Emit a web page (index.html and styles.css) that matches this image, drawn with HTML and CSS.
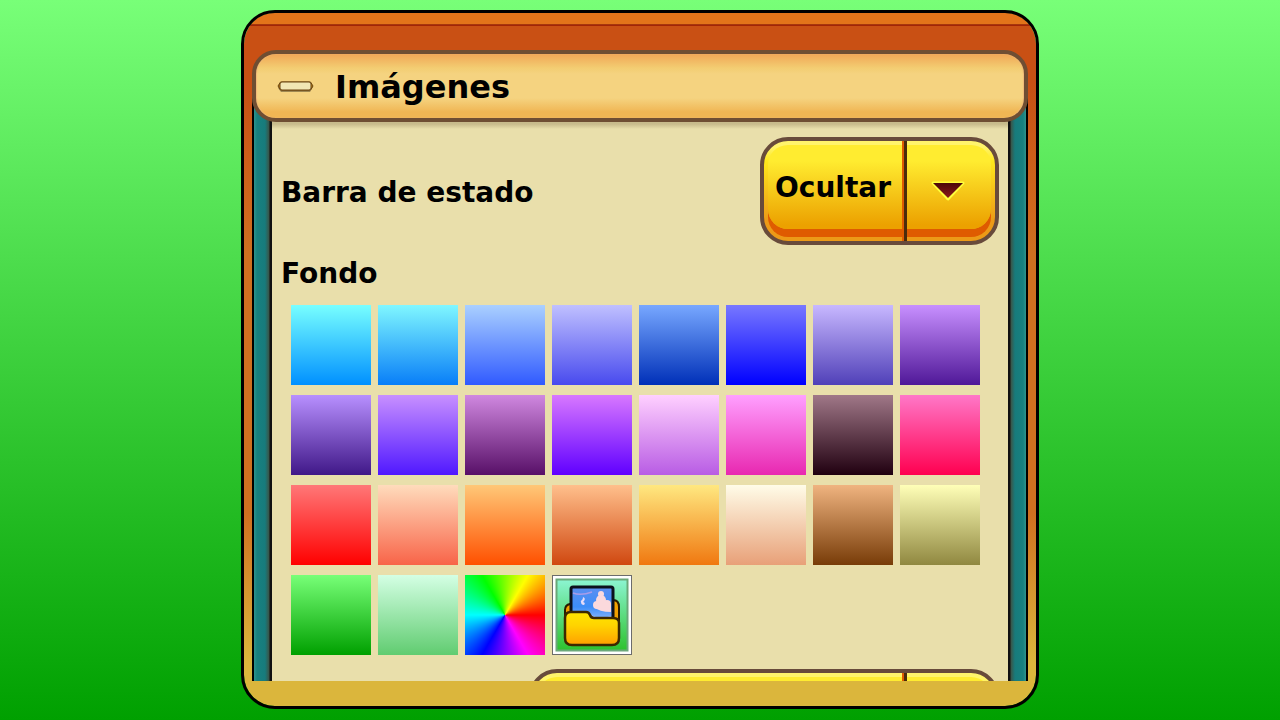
FILE: index.html
```html
<!DOCTYPE html>
<html lang="es">
<head>
    <meta charset="UTF-8">
    <meta name="viewport" content="width=device-width, initial-scale=1.0">
    <title>Imágenes</title>
    <link rel="stylesheet" href="styles.css">
</head>
<body>
    <main class="panel">
        <h1 class="panel-title">
            <button type="button" class="panel-header" id="toggle-btn" aria-expanded="true" aria-controls="settings">
                <svg class="minus-icon" width="37" height="14" viewBox="0 0 37 14" aria-hidden="true">
                    <path d="M4 4h29l3 3-3 5H4L1 8z" fill="#000" opacity=".35"/>
                    <path d="M3.500 2h30L36 6l-2.500 4h-30L1 6z" fill="#c48a1c" stroke="#6b4510"/>
                    <rect x="3" y="2" width="31" height="8" rx="2" fill="#f1e6b4" stroke="#6b4510"/>
                </svg>
                Imágenes
            </button>
        </h1>
        <div class="frame">
            <div class="settings" id="settings">
                <div class="row">
                    <label for="status-bar">Barra de estado</label>
                    <div class="dropdown">
                        <select id="status-bar">
                            <option>Ocultar</option>
                            <option>Mostrar</option>
                        </select>
                        <svg class="arrow" width="36" height="22" viewBox="0 0 36 22" aria-hidden="true">
                            <defs>
                                <linearGradient id="arrow-fill" x1="0" y1="0" x2="0" y2="1">
                                    <stop offset="0" stop-color="#4d0808"/>
                                    <stop offset="1" stop-color="#8c1a1a"/>
                                </linearGradient>
                            </defs>
                            <path d="M3 3h30L18 19z" fill="#ffff3c" stroke="#ffff3c" stroke-width="3" stroke-linejoin="round"/>
                            <path d="M3 3h30L18 18z" fill="url(#arrow-fill)"/>
                        </svg>
                    </div>
                </div>
                <h2 class="section-title">Fondo</h2>
                <div class="swatches" id="swatches">
                    <button type="button" class="swatch wheel" aria-label="Color"></button>
                    <button type="button" class="swatch picture" aria-label="Imagen">
                        <svg width="80" height="80" viewBox="0 0 80 80" aria-hidden="true">
                            <defs>
                                <linearGradient id="card" x1="0" y1="0" x2="0" y2="1">
                                    <stop offset="0" stop-color="#8cf5d2"/>
                                    <stop offset="1" stop-color="#2dc22d"/>
                                </linearGradient>
                                <linearGradient id="sky" x1="0" y1="0" x2="0" y2="1">
                                    <stop offset="0" stop-color="#5c8ff0"/>
                                    <stop offset=".55" stop-color="#3c8df8"/>
                                    <stop offset="1" stop-color="#9fc0fa"/>
                                </linearGradient>
                                <linearGradient id="folder" x1="0" y1="0" x2="0" y2="1">
                                    <stop offset="0" stop-color="#ffe600"/>
                                    <stop offset=".4" stop-color="#ffd400"/>
                                    <stop offset="1" stop-color="#ff9f00"/>
                                </linearGradient>
                            </defs>
                            <rect x=".5" y=".5" width="79" height="79" fill="#fff" stroke="#6c6c6c"/>
                            <rect x="4.500" y="4.500" width="71" height="71" fill="url(#card)" stroke="#6aa878" stroke-width="2"/>
                            <path d="M13 44v-9q0-5 5-6h43v-4q6 0 6 7v14H13z" fill="#f0a000" stroke="#2a1c00" stroke-width="2"/>
                            <rect x="19" y="12" width="42" height="36" rx="2" fill="url(#sky)" stroke="#0c101c" stroke-width="3"/>
                            <path d="M21 18q8 3 19-1" fill="none" stroke="#a99ce8" stroke-width="1.500"/>
                            <g fill="#fbd9dc">
                                <circle cx="45" cy="30" r="4"/>
                                <circle cx="49" cy="25" r="5"/>
                                <circle cx="49" cy="19" r="3"/>
                                <circle cx="55" cy="29" r="4"/>
                                <path d="M42 29h17v8q-12 0-17-5z"/>
                            </g>
                            <path d="M31 22q3 1 1 4l-1 1q3 1 1 3-3 0-3-3-1-1 1-2 1-1 1-3z" fill="#e8dcf8"/>
                            <path d="M21 39q9-4 18 1t20 1v5H21z" fill="#d5d6fa" opacity=".65"/>
                            <path d="M13 43q0-6 6-6h15q3 0 4 3t4 3h19q6 0 6 5v15q0 7-7 7H20q-7 0-7-7z" fill="url(#folder)" stroke="#3c2800" stroke-width="2.500"/>
                        </svg>
                    </button>
                </div>
                <div class="row">
                    <div class="dropdown wide">
                        <select aria-label="Tamaño"></select>
                    </div>
                </div>
            </div>
        </div>
    </main>
    <script>
        const gradients = [
            ['#78ffff', '#0090ff'], ['#80f7ff', '#087ef8'], ['#aad0ff', '#305aff'], ['#c0c0ff', '#484aee'],
            ['#78a8ff', '#0030b8'], ['#7878ff', '#0000ff'], ['#c8b8ff', '#5040b8'], ['#c890ff', '#501898'],
            ['#b890ff', '#401888'], ['#c890ff', '#5018ff'], ['#d088e0', '#581068'], ['#d878ff', '#6000ff'],
            ['#ffd0ff', '#b85ce4'], ['#ffa0ff', '#e828b0'], ['#a07888', '#200010'], ['#ff78c8', '#ff0050'],
            ['#ff7878', '#ff0000'], ['#ffdcbc', '#f86448'], ['#ffc878', '#ff5000'], ['#ffc08c', '#d04810'],
            ['#ffe880', '#f07810'], ['#fffce8', '#e8a078'], ['#f0b480', '#783c08'], ['#ffffb8', '#908840'],
            ['#78ff78', '#00a000'], ['#d4ffe4', '#60cc70']
        ];

        const swatches = document.getElementById('swatches');
        const wheel = swatches.querySelector('.wheel');

        gradients.forEach(([top, bottom], index) => {
            const button = document.createElement('button');
            button.type = 'button';
            button.className = 'swatch';
            button.setAttribute('aria-label', `Fondo ${index + 1}`);
            button.style.background = `linear-gradient(${top}, ${bottom})`;
            button.addEventListener('click', () => {
                document.body.style.background = button.style.background;
            });
            swatches.insertBefore(button, wheel);
        });

        const toggleBtn = document.getElementById('toggle-btn');
        toggleBtn.addEventListener('click', () => {
            const settings = document.getElementById('settings');
            settings.hidden = !settings.hidden;
            toggleBtn.setAttribute('aria-expanded', String(!settings.hidden));
        });
    </script>
</body>
</html>
```

FILE: styles.css
```css
* {
    box-sizing: border-box;
}

body {
    margin: 0;
    height: 100vh;
    padding: 10px 10px 11px;
    display: flex;
    justify-content: center;
    background: linear-gradient(#78ff78, #00a000);
    font-family: "DejaVu Sans", Verdana, sans-serif;
    font-size: 28px;
    font-weight: bold;
    line-height: 36px;
    color: #000;
}

button, select {
    font: inherit;
    color: inherit;
    border: none;
    padding: 0;
    cursor: pointer;
}

.panel {
    display: flex;
    flex-direction: column;
    width: 100%;
    max-width: 798px;
    padding: 37px 8px 25px;
    border: 3px solid #000;
    border-radius: 34px;
    background:
        linear-gradient(#e2741a 11px, #a84010 11px, #a01c04 13px, transparent 13px) padding-box,
        linear-gradient(#c95014, #c95014 70px, #d07020 240px, #d07020 500px, #dbb63c 650px) padding-box;
}

.panel-title {
    position: relative;
    z-index: 1;
    margin: 0;
    font-size: 32px;
}

.panel-header {
    display: flex;
    align-items: center;
    gap: 21px;
    width: 100%;
    height: 72px;
    padding: 2px 21px 0;
    border: 4px solid #6f4e33;
    border-radius: 24px;
    background: linear-gradient(#f0a656, #f3cd72 14px, #f5d380 20px, #f5d380 44px, #f0b654 58px);
    box-shadow: inset 1px 0 1px #f0b878, inset -1px 0 1px #f0b878;
}

/* teal rails on both sides of the settings */
.frame {
    flex: 1;
    min-height: 0;
    margin-top: -36px;
    padding: 0 20px;
    overflow: hidden;
    background:
        linear-gradient(to right, #000 2px, #2f948c 2px, #18807f 5px, #177b7c 13px, #3a5548 17px, #111 18px, #111 20px, transparent 20px),
        linear-gradient(to left, #000 2px, #2f948c 2px, #18807f 5px, #177b7c 13px, #3a5548 17px, #111 18px, #111 20px, transparent 20px),
        linear-gradient(#c8bb8c 38px, #e9dfab 43px);
}

.settings {
    height: 100%;
    padding: 51px 9px 20px;
    overflow-y: auto;
    scrollbar-width: none;
}

.row {
    display: flex;
    align-items: center;
    justify-content: space-between;
}

.row label {
    padding-top: 3px;
}

.section-title {
    margin: 11px 0 13px;
    font-size: 28px;
}

.dropdown {
    position: relative;
    width: 239px;
    padding: 4px 4px 12px;
    border: 4px solid #684b3b;
    border-radius: 28px;
    background: linear-gradient(#fff46c 6px, #ffe81c 20px, #ec9a17 80px);
}

.dropdown.wide {
    width: 470px;
    margin-left: auto;
}

.dropdown select {
    display: block;
    appearance: none;
    width: 100%;
    height: 84px;
    padding: 2px 0 0 7px;
    border-radius: 20px;
    background: linear-gradient(#ffec30 16px, #eca100 80px);
    box-shadow: 0 8px 0 #df5b00;
}

/* divider between the value and the arrow */
.dropdown::after {
    content: "";
    position: absolute;
    top: 0;
    bottom: 0;
    right: 88px;
    width: 5px;
    background: linear-gradient(to right, #df5b00 2px, #4a2c0c 2px);
    pointer-events: none;
}

.arrow {
    position: absolute;
    right: 29px;
    top: 39px;
    pointer-events: none;
}

.swatches {
    display: flex;
    flex-wrap: wrap;
    gap: 10px 7px;
    margin: 0 10px 14px;
}

.swatch {
    width: 80px;
    height: 80px;
}

.wheel {
    background: conic-gradient(from 90deg, #f00, #f0f, #00f, #0ff, #0f0, #ff0, #f00);
}

.picture {
    background: none;
}

.picture svg {
    display: block;
}
```
